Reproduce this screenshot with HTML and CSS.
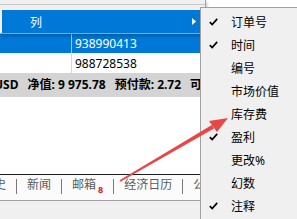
FILE: index.html
```html
<!DOCTYPE html>
<html>
<head>
<meta charset="utf-8">
<link rel="stylesheet" href="styles.css">
</head>
<body>
<div class="screen">
  <div class="top"></div>
  <div class="row sel"><div class="c1"></div><div class="c2">938990413</div></div>
  <div class="row"><div class="c1"></div><div class="c2">988728538</div></div>
  <div class="status">
    <span>USD</span>
    <span>净值: 9 975.78</span>
    <span>预付款: 2.72</span>
    <span>可用预付款: 9 973.06</span>
  </div>
  <div class="blank"></div>
  <div class="tabs">
    <span class="tab">历史</span><span class="sep"></span>
    <span class="tab">新闻</span><span class="sep"></span>
    <span class="tab">邮箱<b class="badge">8</b></span><span class="sep"></span>
    <span class="tab">经济日历</span><span class="sep"></span>
    <span class="tab">公司</span>
  </div>
  <div class="bottom"></div>

  <div class="menu">
    <div class="menu-sep"></div>
    <div class="menu-item hl">
      <span class="label">列</span>
      <svg class="sub-arrow" width="4" height="7" viewBox="0 0 4 7"><path d="M0 0 L4 3.5 L0 7 Z" fill="#fff"/></svg>
    </div>
  </div>

  <div class="submenu">
    <div class="sm-item"><span class="chk"><svg width="9" height="8" viewBox="0 0 9 8"><path d="M0.8 4.2 L3.2 6.6 L8.2 0.9" fill="none" stroke="#000" stroke-width="1.7"/></svg></span>订单号</div>
    <div class="sm-item"><span class="chk"><svg width="9" height="8" viewBox="0 0 9 8"><path d="M0.8 4.2 L3.2 6.6 L8.2 0.9" fill="none" stroke="#000" stroke-width="1.7"/></svg></span>时间</div>
    <div class="sm-item"><span class="chk"></span>编号</div>
    <div class="sm-item"><span class="chk"></span>市场价值</div>
    <div class="sm-item"><span class="chk"></span>库存费</div>
    <div class="sm-item"><span class="chk"><svg width="9" height="8" viewBox="0 0 9 8"><path d="M0.8 4.2 L3.2 6.6 L8.2 0.9" fill="none" stroke="#000" stroke-width="1.7"/></svg></span>盈利</div>
    <div class="sm-item"><span class="chk"></span>更改%</div>
    <div class="sm-item"><span class="chk"></span>幻数</div>
    <div class="sm-item"><span class="chk"><svg width="9" height="8" viewBox="0 0 9 8"><path d="M0.8 4.2 L3.2 6.6 L8.2 0.9" fill="none" stroke="#000" stroke-width="1.7"/></svg></span>注释</div>
  </div>

  <svg class="annot" width="297" height="219" viewBox="0 0 297 219">
    <polygon points="119.6,180.3 120.4,181.7 214,128.4 212.2,124.8" fill="#e84747"/>
    <polygon points="228,118 209,121 217,132" fill="#e84747"/>
  </svg>
</div>
</body>
</html>
```

FILE: styles.css
```css
html, body {
  margin: 0;
  padding: 0;
}
body {
  width: 297px;
  height: 219px;
  overflow: hidden;
  background: #fff;
  font-family: "Noto Sans", "Noto Sans CJK SC", sans-serif;
  font-size: 12px;
  color: #000;
}
.screen {
  position: relative;
  width: 297px;
  height: 219px;
  overflow: hidden;
  display: flex;
  flex-direction: column;
}
.top {
  height: 34px;
  flex: none;
}
.row {
  display: flex;
  height: 19px;
  line-height: 19px;
  flex: none;
}
.row.sel {
  background: #0078d7;
  color: #fff;
  border-bottom: 1px solid #fff;
}
.c1 {
  width: 71px;
  flex: none;
}
.c2 {
  border-left: 1px solid #d8d8d8;
  padding-left: 3px;
  flex: 1;
}
.row.sel .c2 {
  border-left-color: #9ccaf0;
}
.status {
  flex: none;
  height: 22px;
  padding-top: 2px;
  line-height: 20px;
  background: #d4d4d4;
  font-weight: bold;
  display: flex;
  gap: 9px;
  white-space: nowrap;
  margin-left: -6px;
  padding-left: 0;
  width: 320px;
}
.blank {
  flex: 1;
}
.tabs {
  flex: none;
  height: 25px;
  border-top: 1px solid #1e1e1e;
  border-bottom: 1px solid #a0a0a0;
  background: #fbfbfb;
  display: flex;
  align-items: center;
  color: #5a5a5a;
  white-space: nowrap;
  margin-left: -28px;
  width: 350px;
  padding-left: 0;
}
.tab {
  padding: 0 10px;
  line-height: 16px;
  margin-top: -5px;
}
.badge {
  color: #e81123;
  font-size: 9px;
  font-weight: bold;
  margin-left: 2px;
  position: relative;
  top: 4px;
}
.sep {
  width: 1px;
  height: 15px;
  background: #7a7a7a;
  margin-top: -2px;
}
.bottom {
  flex: none;
  height: 18px;
  background: #f0f0f0;
}
.menu {
  position: absolute;
  left: 0;
  top: 0;
  width: 205px;
  border-right: 1px solid #a0a0a0;
  border-bottom: 1px solid #a0a0a0;
  background: #f0f0f0;
  box-shadow: 1px 2px 3px rgba(0, 0, 0, 0.25);
}
.menu-sep {
  height: 10px;
  background: linear-gradient(#f0f0f0 4px, #c8c8c8 4px, #c8c8c8 5px, #f0f0f0 5px);
}
.menu-item {
  height: 23px;
  margin: 0 1px 0 2px;
  display: flex;
  align-items: center;
}
.menu-item.hl {
  background: #0078d7;
  color: #fff;
}
.label {
  padding-left: 28px;
  flex: 1;
}
.sub-arrow {
  margin-right: 8px;
}
.submenu {
  position: absolute;
  left: 200px;
  top: 7px;
  width: 120px;
  height: 240px;
  border-left: 1px solid #a0a0a0;
  border-top: 1px solid #a0a0a0;
  background: #f0f0f0;
  padding-top: 2px;
  box-sizing: border-box;
}
.sm-item {
  height: 23px;
  display: flex;
  align-items: center;
}
.chk {
  width: 30px;
  flex: none;
  display: flex;
  align-items: center;
  padding-left: 8px;
  box-sizing: border-box;
}
.annot {
  position: absolute;
  left: 0;
  top: 0;
  pointer-events: none;
}
```
